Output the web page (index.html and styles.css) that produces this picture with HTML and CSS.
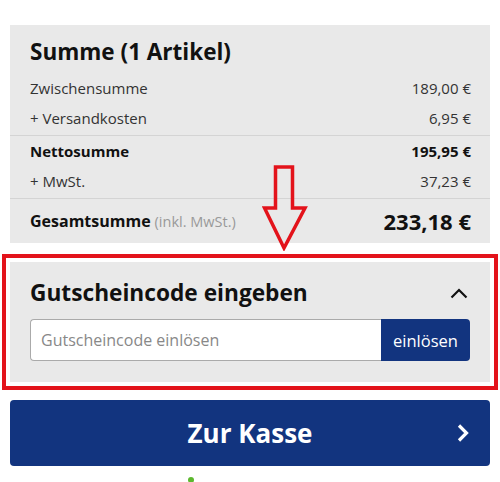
FILE: index.html
```html
<!DOCTYPE html>
<html lang="de">
<head>
  <meta charset="UTF-8">
  <meta name="viewport" content="width=device-width, initial-scale=1.0">
  <title>Warenkorb</title>
  <link rel="stylesheet" href="styles.css">
</head>
<body>
  <div class="cart">
    <section class="summary">
      <h2 class="summary-title">Summe (1 Artikel)</h2>
      <div class="group">
        <div class="row"><span>Zwischensumme</span><span>189,00 €</span></div>
        <div class="row"><span>+ Versandkosten</span><span>6,95 €</span></div>
      </div>
      <div class="group">
        <div class="row strong"><span>Nettosumme</span><span>195,95 €</span></div>
        <div class="row"><span>+ MwSt.</span><span>37,23 €</span></div>
      </div>
      <div class="group last">
        <div class="row total">
          <span><b>Gesamtsumme</b> <small>(inkl. MwSt.)</small></span>
          <span class="total-value">233,18 €</span>
        </div>
      </div>

      <!-- annotation arrow -->
      <svg class="arrow" width="46" height="86" viewBox="0 0 46 86">
        <path d="M13.5 2 H30.5 V43 H43 L22 83 L2.5 43 H13.5 Z" fill="none" stroke="#e3131b" stroke-width="3.5" stroke-linejoin="miter"/>
      </svg>
    </section>

    <section class="coupon">
      <div class="coupon-head">
        <h3>Gutscheincode eingeben</h3>
        <svg class="caret" width="18" height="11" viewBox="0 0 18 11">
          <path d="M1.5 9.5 L9 2 L16.5 9.5" fill="none" stroke="#111" stroke-width="2.2"/>
        </svg>
      </div>
      <form class="coupon-form">
        <input type="text" placeholder="Gutscheincode einlösen">
        <button type="button">einlösen</button>
      </form>
    </section>

    <button class="checkout" type="button">
      Zur Kasse
      <svg class="chevron" width="14" height="20" viewBox="0 0 14 20">
        <path d="M3 2.5 L10.5 10 L3 17.5" fill="none" stroke="#fff" stroke-width="3.2"/>
      </svg>
    </button>

    <div class="trust"><span class="dot"></span></div>
  </div>
</body>
</html>
```

FILE: styles.css
```css
body {
  margin: 0;
  background: #fff;
  font-family: "Open Sans", "Noto Sans", Arial, sans-serif;
  color: #111;
}

.cart {
  padding: 25px 10px 0 10px;
}

.summary {
  position: relative;
  background: #e9e9e9;
  padding: 10px 0 4px 0;
}

.summary-title {
  margin: 0 0 4px 0;
  padding: 0 19px 0 20px;
  font-size: 22.5px;
  line-height: 34px;
  font-weight: 700;
  color: #111;
}

.group {
  padding-bottom: 2px;
  border-bottom: 1px solid #d4d4d4;
}

.group.last {
  border-bottom: none;
  padding: 4px 0 0 0;
}

.row {
  display: flex;
  justify-content: space-between;
  align-items: center;
  padding: 0 19px 0 20px;
  height: 30px;
  font-size: 15px;
  color: #333;
}

.row.strong {
  font-weight: 700;
  color: #111;
}

.row.total {
  height: 36px;
}

.row.total b {
  font-size: 16px;
  color: #111;
}

.row.total small {
  font-size: 14.5px;
  color: #999;
}

.total-value {
  font-size: 22px;
  font-weight: 700;
  color: #111;
}

.arrow {
  position: absolute;
  left: 252px;
  top: 140px;
}

.coupon {
  margin-top: 19px;
  background: #e9e9e9;
  outline: 4px solid #e3131b;
  outline-offset: 4px;
  padding: 16px 20px 21px 20px;
}

.coupon-head {
  display: flex;
  justify-content: space-between;
  align-items: center;
}

.coupon-head h3 {
  margin: 0;
  font-size: 22.7px;
  line-height: 30px;
  font-weight: 700;
  color: #111;
}

.caret {
  margin-right: 2px;
}

.coupon-form {
  display: flex;
  margin-top: 11px;
  height: 42px;
}

.coupon-form input {
  flex: 1;
  min-width: 0;
  border: 1px solid #aaa;
  border-right: none;
  border-radius: 4px 0 0 4px;
  padding: 0 10px;
  font-family: inherit;
  font-size: 16px;
  background: #fff;
}

.coupon-form input::placeholder {
  color: #888;
}

.coupon-form button {
  width: 89px;
  border: none;
  border-radius: 0 4px 4px 0;
  background: #12347f;
  color: #fff;
  font-family: inherit;
  font-size: 16.5px;
  cursor: pointer;
}

.checkout {
  position: relative;
  display: flex;
  justify-content: center;
  align-items: center;
  width: 100%;
  height: 66px;
  margin-top: 18px;
  border: none;
  border-radius: 4px;
  background: #12347f;
  color: #fff;
  font-family: inherit;
  font-size: 26px;
  font-weight: 700;
  cursor: pointer;
}

.chevron {
  position: absolute;
  right: 20px;
  top: 23px;
}

.trust {
  padding: 11px 0 0 178px;
}

.dot {
  display: block;
  width: 6px;
  height: 6px;
  border-radius: 50%;
  background: #5cb82e;
}
```
